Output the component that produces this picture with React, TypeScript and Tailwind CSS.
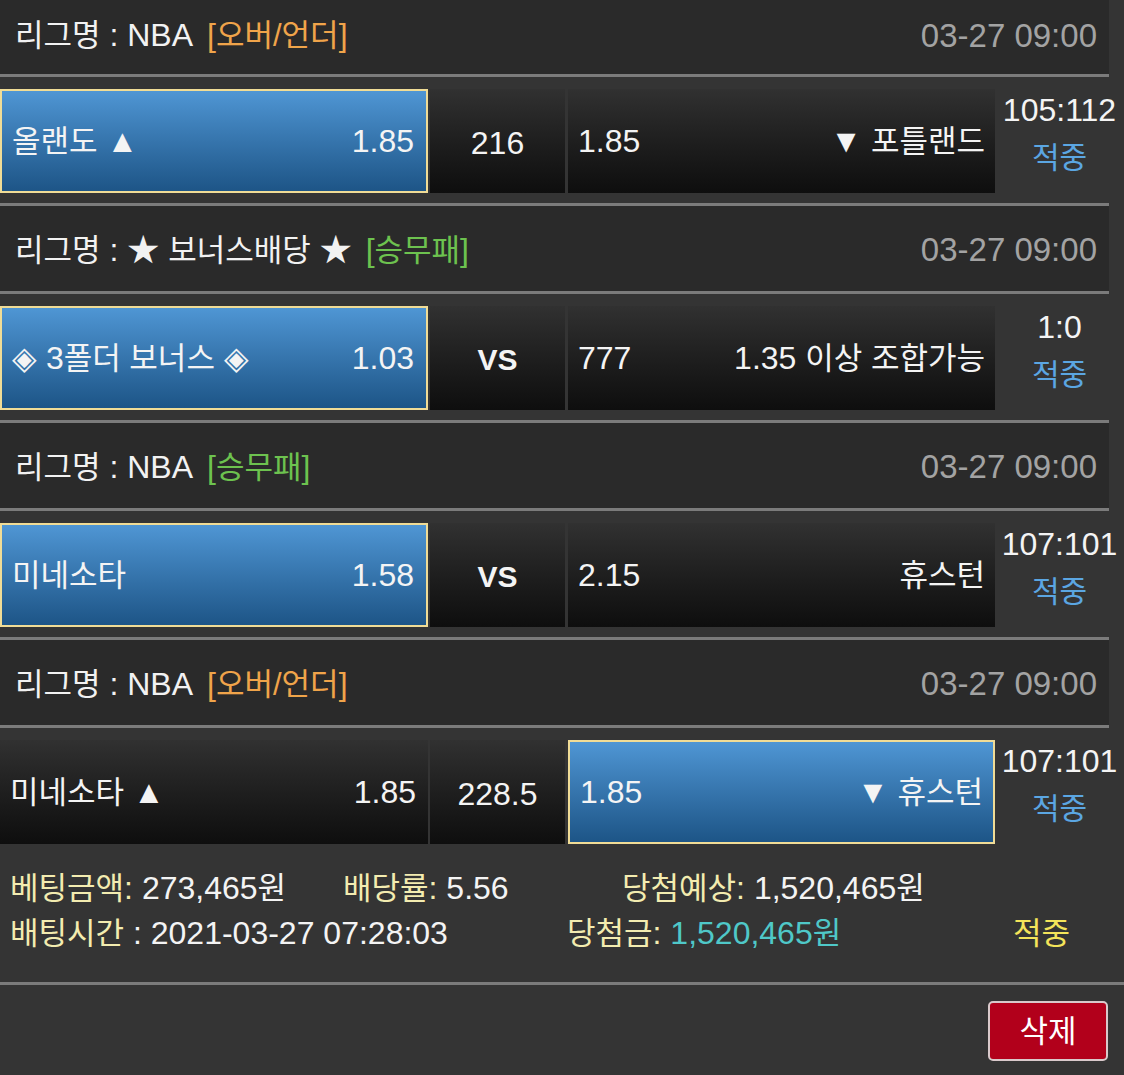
import React from 'react';

type Cell = { text: React.ReactNode; odd: string; on?: boolean };

interface Game {
  league: React.ReactNode;
  tag: string;
  tagColor: string;
  left: Cell;
  mid: string;
  bold?: boolean;
  right: Cell;
  score: string;
}

const Ko: React.FC<{ children: React.ReactNode }> = ({ children }) => (
  <span className="text-[31px]">{children}</span>
);

const games: Game[] = [
  {
    league: 'NBA',
    tag: '오버/언더',
    tagColor: 'text-[#f0a44a]',
    left: { text: <><Ko>올랜도</Ko> ▲</>, odd: '1.85', on: true },
    mid: '216',
    right: { text: <>▼ <Ko>포틀랜드</Ko></>, odd: '1.85' },
    score: '105:112',
  },
  {
    league: <>★ <Ko>보너스배당</Ko> ★</>,
    tag: '승무패',
    tagColor: 'text-[#6dc24f]',
    left: { text: <>◈ 3<Ko>폴더 보너스</Ko> ◈</>, odd: '1.03', on: true },
    mid: 'VS',
    bold: true,
    right: { text: <>1.35 <Ko>이상 조합가능</Ko></>, odd: '777' },
    score: '1:0',
  },
  {
    league: 'NBA',
    tag: '승무패',
    tagColor: 'text-[#6dc24f]',
    left: { text: <Ko>미네소타</Ko>, odd: '1.58', on: true },
    mid: 'VS',
    bold: true,
    right: { text: <Ko>휴스턴</Ko>, odd: '2.15' },
    score: '107:101',
  },
  {
    league: 'NBA',
    tag: '오버/언더',
    tagColor: 'text-[#f0a44a]',
    left: { text: <><Ko>미네소타</Ko> ▲</>, odd: '1.85' },
    mid: '228.5',
    right: { text: <>▼ <Ko>휴스턴</Ko></>, odd: '1.85', on: true },
    score: '107:101',
  },
];

const blue = 'bg-gradient-to-b from-[#4f96d4] to-[#1d5587] border-2 border-[#f0dc96]';
const dark = 'bg-gradient-to-b from-[#313131] to-[#0e0e0e]';

const Divider = () => <div className="h-[3px] w-[1109px] bg-[#7b7b7b]" />;

const Header: React.FC<{ g: Game; first?: boolean }> = ({ g, first }) => (
  <div
    className={`flex w-[1109px] items-center justify-between bg-[#2a2a2a] pl-[15px] pr-[12px] ${
      first ? 'h-[74px] pb-[4px]' : 'h-[85px] pt-[2px]'
    }`}
  >
    <div className="flex items-baseline text-[#f2f2f2]">
      <Ko>리그명</Ko>
      <span>&nbsp;: {g.league}</span>
      <span className={`ml-[14px] ${g.tagColor}`}>
        [<Ko>{g.tag}</Ko>]
      </span>
    </div>
    <span className="text-[33px] text-[#a3a3a3]">03-27 09:00</span>
  </div>
);

const BetRow: React.FC<{ g: Game }> = ({ g }) => (
  <div className="flex h-[126px] pt-[12px] pb-[10px]">
    <div
      className={`flex h-[104px] w-[428px] items-center justify-between pl-[10px] pr-[12px] ${
        g.left.on ? blue : dark
      }`}
    >
      <span>{g.left.text}</span>
      <span>{g.left.odd}</span>
    </div>
    <div
      className={`ml-[2px] flex h-[104px] w-[135px] items-center justify-center pt-[4px] ${dark} ${
        g.bold ? 'font-bold text-[30px]' : ''
      }`}
    >
      {g.mid}
    </div>
    <div
      className={`ml-[3px] flex h-[104px] w-[427px] items-center justify-between pl-[10px] pr-[10px] ${
        g.right.on ? blue : dark
      }`}
    >
      <span>{g.right.odd}</span>
      <span>{g.right.text}</span>
    </div>
    <div className="-mt-[2px] flex w-[129px] flex-col items-center leading-[47px]">
      <span>{g.score}</span>
      <span className="text-[30px] text-[#5ba6e2]">적중</span>
    </div>
  </div>
);

export default function App() {
  return (
    <div className="min-h-[1075px] w-[1124px] overflow-hidden bg-[#343434] font-['Liberation_Sans','Noto_Sans_CJK_KR',sans-serif] text-[32px] leading-none text-[#f4f4f4]">
      {games.map((g, i) => (
        <div key={i}>
          {i > 0 && <Divider />}
          <Header g={g} first={i === 0} />
          <Divider />
          <BetRow g={g} />
        </div>
      ))}

      <div className="pt-[11px] pb-[27px] pl-[10px]">
        <div className="flex h-[45px] items-center">
          <span className="w-[333px]">
            <span className="text-[#f3ecb0]">
              <Ko>베팅금액</Ko>:
            </span>{' '}
            273,465<Ko>원</Ko>
          </span>
          <span className="w-[279px]">
            <span className="text-[#f3ecb0]">
              <Ko>배당률</Ko>:
            </span>{' '}
            5.56
          </span>
          <span>
            <span className="text-[#f3ecb0]">
              <Ko>당첨예상</Ko>:
            </span>{' '}
            1,520,465<Ko>원</Ko>
          </span>
        </div>
        <div className="flex h-[45px] items-center">
          <span className="w-[557px]">
            <span className="text-[#f3ecb0]">
              <Ko>배팅시간</Ko>
            </span>{' '}
            : 2021-03-27 07:28:03
          </span>
          <span className="w-[446px]">
            <span className="text-[#f3ecb0]">
              <Ko>당첨금</Ko>:
            </span>{' '}
            <span className="text-[#4fc8c8]">
              1,520,465<Ko>원</Ko>
            </span>
          </span>
          <span className="text-[#f4e45a]">
            <Ko>적중</Ko>
          </span>
        </div>
      </div>

      <div className="h-[3px] w-full bg-[#7b7b7b]" />

      <div className="flex justify-end pt-[16px] pr-[16px]">
        <button className="flex h-[60px] w-[120px] items-center justify-center rounded-[5px] border-2 border-[#d9c9cb] bg-[#b2001b] text-[31px] text-white">
          삭제
        </button>
      </div>
    </div>
  );
}
